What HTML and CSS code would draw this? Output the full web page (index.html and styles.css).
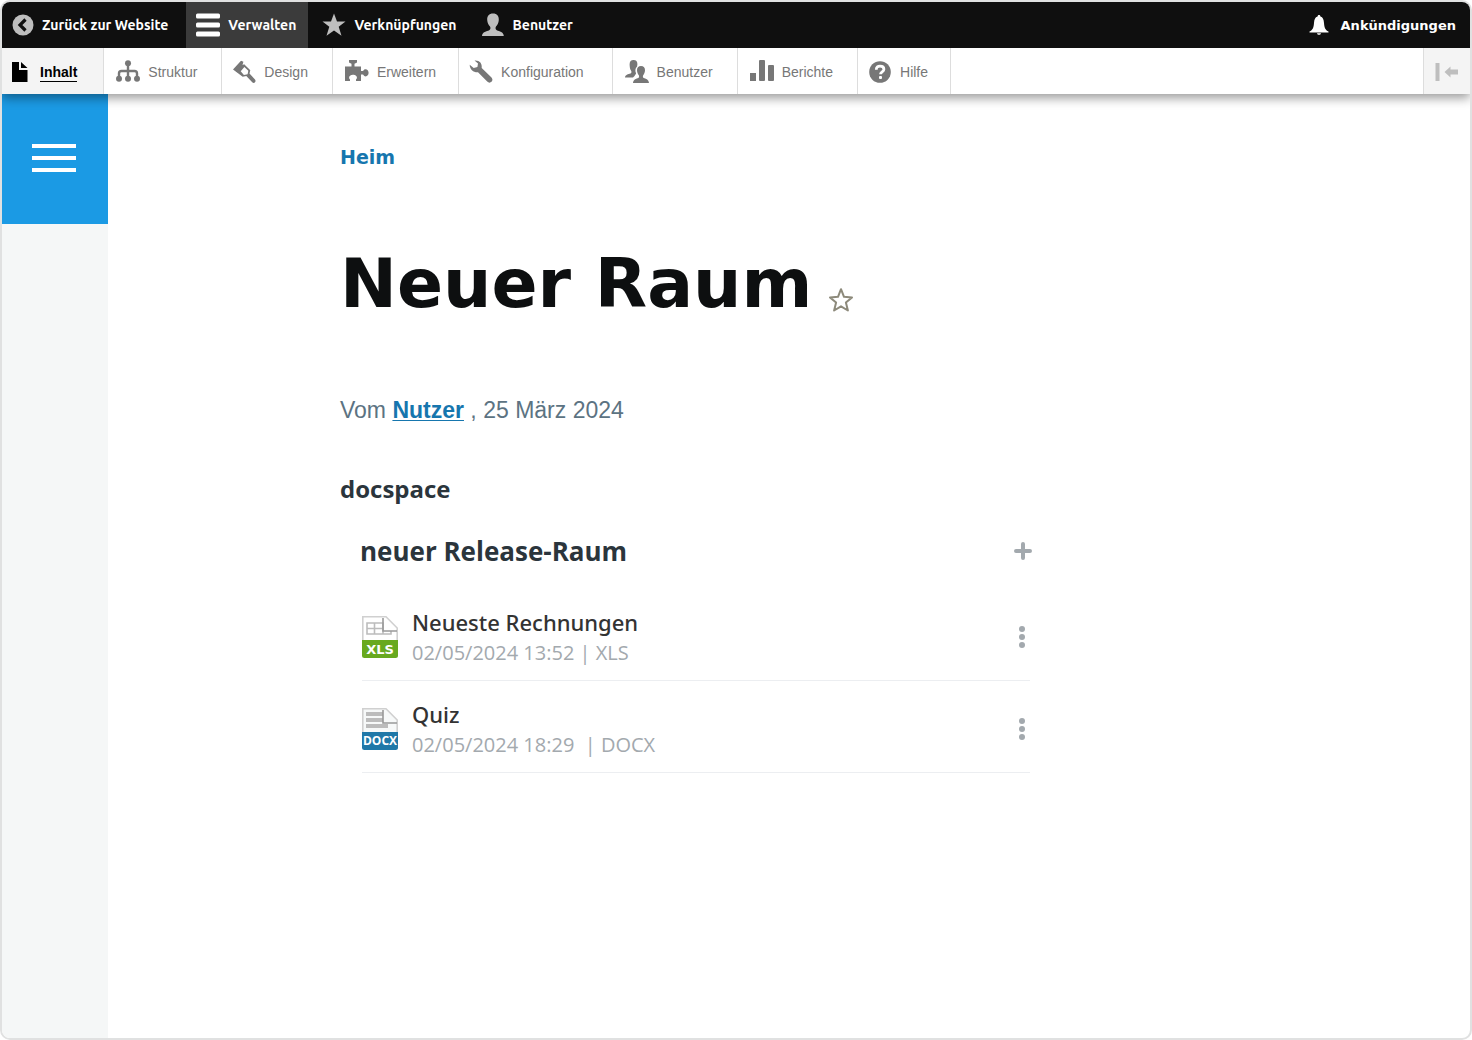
FILE: index.html
```html
<!DOCTYPE html>
<html lang="de">
<head>
<meta charset="utf-8">
<title>Neuer Raum</title>
<meta name="viewport" content="width=device-width, initial-scale=1">
<link rel="stylesheet" href="styles.css">
</head>
<body>
<div class="frame">
  <header class="toolbar">
    <nav class="bar" aria-label="Werkzeugleiste">
      <a class="bar__item" href="#">
        <svg class="bar__icon bar__icon--small" viewBox="0 0 22 22" aria-hidden="true"><circle cx="11" cy="11" r="10.5" fill="#bebebe"/><path d="M13.5 5.500L8 11l5.500 5.500" fill="none" stroke="#0f0f0f" stroke-width="3.200"/></svg>
        Zurück zur Website</a>
      <a class="bar__item bar__item--active" href="#">
        <svg class="bar__icon" viewBox="0 0 24 24" aria-hidden="true"><g fill="#fff"><rect y="0.500" width="24" height="5" rx="1.500"/><rect y="9.500" width="24" height="5" rx="1.500"/><rect y="18.500" width="24" height="5" rx="1.500"/></g></svg>
        Verwalten</a>
      <a class="bar__item" href="#">
        <svg class="bar__icon" viewBox="0 0 24 24" aria-hidden="true"><path d="M12 .5l3 8h8.500l-6.800 5.200 2.800 9L12 17.500l-7.500 5.200 2.800-9L.5 8.500H9z" fill="#bebebe"/></svg>
        Verknüpfungen</a>
      <a class="bar__item" href="#">
        <svg class="bar__icon" viewBox="0 0 24 24" aria-hidden="true"><path d="M12 .5c4 0 6 2.500 5.800 6.500-.2 3-1.300 5-2.800 6.600-.8 1.200-.6 3 .8 3.700 2.500 1.200 6.700 1.500 7 5.700H1c.3-4.200 4.700-4.500 7.200-5.700 1.400-.7 1.600-2.500.8-3.700C7.500 12 6.400 10 6.200 7 6 3 8 .5 12 .5z" fill="#bebebe"/></svg>
        Benutzer</a>
      <a class="bar__item bar__item--end" href="#">
        <svg class="bar__icon bar__icon--bell" viewBox="0 0 20 20" aria-hidden="true"><path d="M10 0c1 0 1.400.6 1.400 1.500C14 2.300 14.700 4.500 15 8c.3 4.500 1.200 7 4.500 8.500v.9H.5v-.9C3.800 15 4.700 12.500 5 8c.3-3.500 1-5.700 3.600-6.500C8.600.6 9 0 10 0zM8 18.200h4c-.2 1-1 1.600-2 1.600s-1.800-.6-2-1.600z" fill="#fff"/></svg>
        Ankündigungen</a>
    </nav>
    <nav class="tray" aria-label="Verwaltung">
      <a class="tray__item tray__item--active" href="#" aria-current="page">
        <svg class="tray__icon tray__icon--page" viewBox="0 0 16 22" aria-hidden="true"><path d="M0 1h7v8h8.500v12H0zM9 1l6.500 6H9z" fill="#000"/></svg>
        <span class="tray__label">Inhalt</span></a>
      <a class="tray__item" href="#">
        <svg class="tray__icon" viewBox="0 0 24 24" aria-hidden="true"><g fill="#777"><circle cx="12" cy="3.200" r="3"/><circle cx="3" cy="18.800" r="3"/><circle cx="12" cy="18.800" r="3"/><circle cx="21" cy="18.800" r="3"/></g><path d="M12 4v14M3 18v-4.500q0-2.500 2.500-2.500h13q2.500 0 2.500 2.500V18" fill="none" stroke="#777" stroke-width="2.400"/></svg>
        Struktur</a>
      <a class="tray__item tray__item--tight" href="#">
        <svg class="tray__icon" viewBox="0 0 24 24" aria-hidden="true"><path fill-rule="evenodd" d="M1 9.500L9 .7l2.400 1.100-.9 3.100 1.700-.7 6.100 6-.8 3.400 5.500 6c.9 1.200.6 2.300-.2 3-.9.700-1.900.5-2.800-.5l-5.700-6.200-3.600.8zM8.700 11.300l3.200 3.700 3.700-.8.700-3.400-3.900-3.700z" fill="#777"/></svg>
        Design</a>
      <a class="tray__item tray__item--short" href="#">
        <svg class="tray__icon" viewBox="0 0 24 24" aria-hidden="true"><path d="M0 6.500h6.500V3.800L4 2.500V0h8v2.500L9.500 3.800v2.700H16V11h2l1.300-1.500c2.200-1 4.300.6 4.300 3.300s-2.100 4.300-4.300 3.300L18 14.500h-2V21h-5v-1.500l.9-1.200c.4-2.300-1.600-3.600-3.900-3.600s-4.300 1.300-3.900 3.600l.9 1.200V21H0z" fill="#777"/></svg>
        Erweitern</a>
      <a class="tray__item tray__item--tight tray__item--wide" href="#">
        <svg class="tray__icon" viewBox="0 0 24 24" aria-hidden="true"><path d="M5.500.5c4.800-.5 7.900 2.700 7.200 7.500l9.800 9.500c1.300 1.500 1.200 3.100 0 4.300-1.300 1.200-3 1.100-4.300-.3L9 12.300C4.500 12.600.8 9.500.7 4.700l4 3.300 3.700-.9.600-3.600z" fill="#777"/></svg>
        Konfiguration</a>
      <a class="tray__item" href="#">
        <svg class="tray__icon" viewBox="0 0 24 24" aria-hidden="true"><path d="M8.500 0c2.600 0 4 1.600 3.900 4.200l-.3 2.300c-2 1.600-2.200 4.500-1 7L9.500 16 8 17.500H0c.2-3 3.200-3.200 5.500-4 1.100-.5 1.200-2 .6-2.800C5 9.500 4.600 6.500 4.600 4.200 4.600 1.600 6 0 8.500 0z" fill="#777"/><path d="M16 6c2.700 0 4.100 1.600 4 4.300-.1 2-.8 3.800-1.800 5-.5.900-.4 2.200.5 2.700 1.900.9 5 1 5.300 5H8c.3-4 3.400-4.100 5.300-5 .9-.5 1-1.800.5-2.700-1-1.200-1.700-3-1.800-5C11.900 7.600 13.300 6 16 6z" fill="#777"/></svg>
        Benutzer</a>
      <a class="tray__item" href="#">
        <svg class="tray__icon" viewBox="0 0 24 24" aria-hidden="true"><g fill="#777"><rect x="0" y="13" width="6" height="8"/><rect x="9" y="0" width="6" height="21" rx="1"/><rect x="18" y="5" width="6" height="16" rx="1"/></g></svg>
        Berichte</a>
      <a class="tray__item tray__item--tight tray__item--short" href="#">
        <svg class="tray__icon" viewBox="0 0 24 24" aria-hidden="true"><circle cx="12" cy="12" r="10.800" fill="#777"/><path d="M8.300 9.800C8.200 7 10 6.200 12 6.200c2.400 0 3.900 1.200 3.900 3 0 2.600-3.400 2.600-3.400 5" fill="none" stroke="#fff" stroke-width="2.800"/><rect x="11" y="16" width="3" height="3" rx="1" fill="#fff"/></svg>
        Hilfe</a>
      <button class="tray__toggle" type="button" aria-label="Vertikale Ausrichtung">
        <svg class="tray__icon" viewBox="0 0 24 22" aria-hidden="true"><path d="M.5 2h4v18h-4zM9.500 11l6-5.500V8.500h7.500v5h-7.500v3z" fill="#bebebe"/></svg>
      </button>
    </nav>
  </header>
  <div class="page">
    <aside class="rail">
      <button class="rail__menu" type="button" aria-label="Menü"><span class="rail__line"></span><span class="rail__line"></span><span class="rail__line"></span></button>
    </aside>
    <main class="content">
      <nav class="crumb" aria-label="Pfadnavigation"><a class="crumb__link" href="#">Heim</a></nav>
      <div class="heading">
        <h1 class="heading__title">Neuer Raum</h1>
        <button class="heading__star" type="button" aria-label="Zu Verknüpfungen hinzufügen">
          <svg class="heading__icon" viewBox="0 0 26 26" aria-hidden="true"><path d="M13 2.200l3 7.600 8 .6-6.100 5.200 2 7.900L13 19.300l-6.900 4.200 2-7.900L2 10.400l8-.6z" fill="none" stroke="#8d8a7b" stroke-width="2" stroke-linejoin="round"/></svg>
        </button>
      </div>
      <p class="byline">Vom <a class="byline__link" href="#">Nutzer</a> , 25 März 2024</p>
      <h2 class="field">docspace</h2>
      <section class="room">
        <div class="room__head">
          <h3 class="room__title">neuer Release-Raum</h3>
          <button class="room__add" type="button" aria-label="Hinzufügen">
            <svg class="room__plus" viewBox="0 0 18 18" aria-hidden="true"><path d="M9 2v14M2 9h14" stroke="#a3a9ae" stroke-width="4" stroke-linecap="round"/></svg>
          </button>
        </div>
        <ul class="files">
          <li class="file">
            <svg class="file__icon" viewBox="0 0 36 42" aria-hidden="true"><path d="M.8 25V.8H24L35.200 12v13" fill="#fff" stroke="#d0d0d0" stroke-width="1.600"/><path d="M5 7h16v11H5zM5 12.500h16M12.500 7v11M21 18h8v-3" fill="none" stroke="#bcbcbc" stroke-width="1.600"/><path d="M21 2v13h14" fill="none" stroke="#999" stroke-width="1.600"/><path d="M0 24h36v15.500q0 2.500-2.500 2.500h-31Q0 42 0 39.500z" fill="#68a91f"/><text class="file__type" x="18" y="38" text-anchor="middle">XLS</text></svg>
            <div class="file__text">
              <a class="file__name" href="#">Neueste Rechnungen</a>
              <span class="file__meta">02/05/2024 13:52 | XLS</span>
            </div>
            <button class="file__more" type="button" aria-label="Weitere Aktionen"><span class="file__dot"></span><span class="file__dot"></span><span class="file__dot"></span></button>
          </li>
          <li class="file">
            <svg class="file__icon" viewBox="0 0 36 42" aria-hidden="true"><path d="M.8 25V.8H24L35.200 12v13" fill="#f7f9f9" stroke="#d0d0d0" stroke-width="1.600"/><path d="M4 6h17M4 12h17M4 18h22" fill="none" stroke="#bcbcbc" stroke-width="4"/><path d="M21 2v13h14" fill="none" stroke="#999" stroke-width="1.600"/><path d="M0 24h36v15.500q0 2.500-2.500 2.500h-31Q0 42 0 39.500z" fill="#1f78a8"/><text class="file__type file__type--narrow" x="18" y="37" text-anchor="middle">DOCX</text></svg>
            <div class="file__text">
              <a class="file__name" href="#">Quiz</a>
              <span class="file__meta">02/05/2024 18:29 &nbsp;| DOCX</span>
            </div>
            <button class="file__more" type="button" aria-label="Weitere Aktionen"><span class="file__dot"></span><span class="file__dot"></span><span class="file__dot"></span></button>
          </li>
        </ul>
      </section>
    </main>
  </div>
</div>
</body>
</html>
```
FILE: styles.css
```css
* {
  box-sizing: border-box;
}

body {
  margin: 0;
  background: #fff;
  font-family: "Open Sans", "Noto Sans", sans-serif;
}

button {
  margin: 0;
  padding: 0;
  border: 0;
  background: none;
  cursor: pointer;
}

a {
  color: inherit;
  text-decoration: none;
}

.frame {
  display: flex;
  flex-direction: column;
  min-height: 100vh;
  overflow: hidden;
  border: 2px solid #e0e1e1;
  border-radius: 10px;
}

.toolbar {
  position: relative;
  z-index: 1;
  box-shadow: 0 4px 10px rgba(0, 0, 0, 0.4);
}

.bar {
  display: flex;
  gap: 4px;
  height: 46px;
  background: #0f0f0f;
  color: #fff;
  font-size: 14px;
  font-weight: 700;
  font-family: Ubuntu, "Noto Sans", sans-serif;
}

.bar__item {
  display: flex;
  align-items: center;
  gap: 8px;
  padding: 0 10px;
  white-space: nowrap;
}

.bar__item--active {
  margin-left: 4px;
  padding-right: 12px;
  background: #3b3b3b;
}

.bar__item--end {
  gap: 12px;
  margin-left: auto;
  padding-right: 14px;
  font-size: 13px;
  font-family: Verdana, "DejaVu Sans", sans-serif;
}

.bar__icon {
  width: 24px;
  height: 24px;
}

.bar__icon--small {
  width: 22px;
  height: 22px;
}

.bar__icon--bell {
  width: 20px;
  height: 20px;
}

.tray {
  display: flex;
  height: 46px;
  background: #fff;
  color: #777;
  font: 14px "Liberation Sans", Arial, sans-serif;
}

.tray__item {
  display: flex;
  align-items: center;
  gap: 8px;
  padding: 2px 24px 0 12px;
  border-right: 1px solid #ddd;
  white-space: nowrap;
}

.tray__item--active {
  gap: 12px;
  padding-right: 26px;
  padding-left: 10px;
  background: #f4f4f4;
  color: #000;
  font-weight: 700;
}

.tray__item--tight {
  padding-left: 10px;
}

.tray__item--short {
  padding-right: 22px;
}

.tray__item--wide {
  padding-right: 28px;
}

.tray__label {
  border-bottom: 1px solid #000;
  line-height: 18px;
}

.tray__icon {
  width: 24px;
  height: 24px;
}

.tray__icon--page {
  width: 16px;
  height: 22px;
}

.tray__toggle {
  display: flex;
  align-items: center;
  justify-content: center;
  width: 47px;
  margin-left: auto;
  padding-top: 2px;
  border-left: 1px solid #ddd;
  background: #f4f4f4;
}

.page {
  display: flex;
  flex: 1;
}

.rail {
  flex: none;
  width: 106px;
  background: #f5f7f7;
}

.rail__menu {
  display: flex;
  flex-direction: column;
  align-items: center;
  justify-content: center;
  gap: 8px;
  width: 100%;
  height: 130px;
  padding: 0 2px 2px 0;
  background: #1b9ae4;
}

.rail__line {
  width: 44px;
  height: 4px;
  background: #fff;
}

.content {
  flex: 1;
  max-width: 924px;
  padding: 48px 0 48px 232px;
}

.crumb {
  color: #1676ae;
  font: 700 19px/30px "DejaVu Sans", Verdana, sans-serif;
}

.heading {
  display: flex;
  align-items: center;
  gap: 16px;
  margin-top: 67px;
}

.heading__title {
  margin: 0;
  color: #0d0f10;
  font: 700 68px/90px "DejaVu Sans", Verdana, sans-serif;
}

.heading__star {
  display: flex;
  padding-top: 32px;
}

.heading__icon {
  width: 26px;
  height: 26px;
}

.byline {
  margin: 63px 0 0;
  color: #5c7382;
  font: 23px/36px "Liberation Sans", Arial, sans-serif;
}

.byline__link {
  color: #1676ae;
  font-weight: 700;
  text-decoration: underline 1px;
  text-underline-offset: 2px;
}

.field {
  margin: 43px 0 0;
  color: #2b353c;
  font-size: 24px;
  line-height: 36px;
}

.room {
  padding: 24px 0 0 20px;
}

.room__head {
  display: flex;
  align-items: center;
  justify-content: space-between;
}

.room__title {
  margin: 0;
  color: #2b353c;
  font-size: 26px;
  line-height: 40px;
}

.room__add {
  display: flex;
}

.room__plus {
  width: 18px;
  height: 18px;
}

.files {
  margin: 18px 2px 0;
  padding: 0;
  list-style: none;
}

.file {
  display: flex;
  align-items: center;
  gap: 14px;
  height: 92px;
  padding-top: 4px;
  border-bottom: 1px solid #eceef1;
}

.file__icon {
  flex: none;
  width: 36px;
  height: 42px;
}

.file__type {
  fill: #fff;
  font: 700 13px "DejaVu Sans", sans-serif;
}

.file__type--narrow {
  font: 700 12px "Open Sans", sans-serif;
}

.file__text {
  display: flex;
  flex: 1;
  flex-direction: column;
}

.file__name {
  color: #333;
  font: 500 22px/32px "Noto Sans", "Open Sans", sans-serif;
}

.file__meta {
  color: #a3a9ae;
  font-size: 20px;
  line-height: 30px;
}

.file__more {
  display: flex;
  flex-direction: column;
  gap: 2px;
  padding: 5px;
}

.file__dot {
  width: 6px;
  height: 6px;
  border-radius: 50%;
  background: #a3a9ae;
}
```
